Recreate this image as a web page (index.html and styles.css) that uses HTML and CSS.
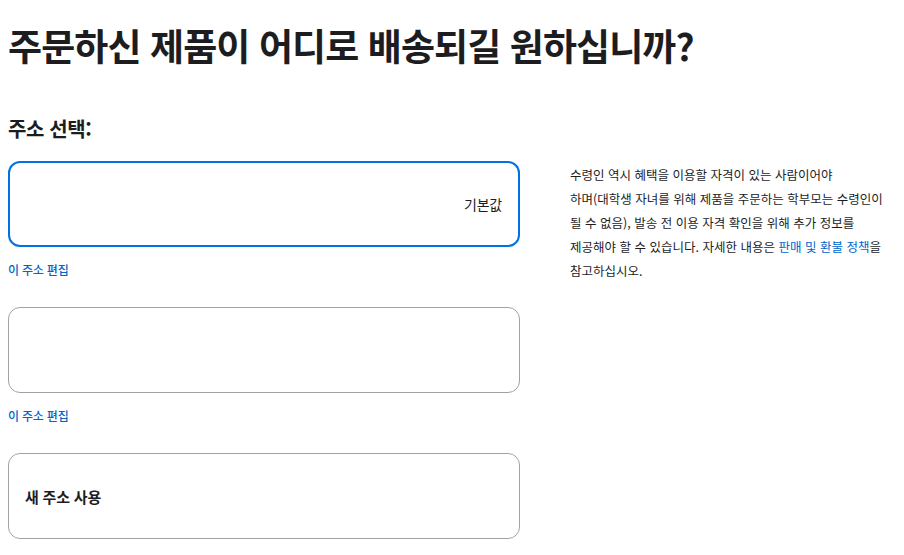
FILE: index.html
```html
<!DOCTYPE html>
<html lang="ko">
<head>
<meta charset="utf-8">
<title>배송 주소</title>
<link rel="stylesheet" href="styles.css">
</head>
<body>
<div class="page">
  <h1 class="title">주문하신 제품이 어디로 배송되길 원하십니까?</h1>
  <h2 class="subtitle">주소 선택:</h2>
  <div class="layout">
    <div class="addresses">
      <div class="addr-card selected">
        <span class="default-label">기본값</span>
      </div>
      <a class="edit-link" href="#">이 주소 편집</a>
      <div class="addr-card"></div>
      <a class="edit-link" href="#">이 주소 편집</a>
      <div class="addr-card new">
        <span class="new-label">새 주소 사용</span>
      </div>
    </div>
    <p class="notice">수령인 역시 혜택을 이용할 자격이 있는 사람이어야 <span class="nowrap">하며(대학생</span> 자녀를 위해 제품을 주문하는 학부모는 수령인이 될 수 없음), 발송 전 이용 자격 확인을 위해 추가 정보를 제공해야 할 수 있습니다. 자세한 내용은 <a href="#">판매 및 환불 정책</a>을 참고하십시오.</p>
  </div>
</div>
</body>
</html>
```
FILE: styles.css
```css
* { box-sizing: border-box; }
html, body { margin: 0; padding: 0; background: #fff; }
body {
  font-family: "Noto Sans CJK KR", "Noto Sans", sans-serif;
  color: #1d1d1f;
}
.page { padding: 0 8px; }
.title {
  margin: 0;
  padding-top: 21px;
  font-size: 37px;
  line-height: 48px;
  font-weight: 700;
  letter-spacing: -0.9px;
  color: #1d1d1f;
}
.subtitle {
  margin: 0;
  padding-top: 46px;
  font-size: 20px;
  line-height: 28px;
  font-weight: 700;
  letter-spacing: -0.4px;
  color: #1d1d1f;
}
.layout {
  display: flex;
  gap: 50px;
  margin-top: 18px;
}
.addresses {
  width: 512px;
  flex: none;
  display: flex;
  flex-direction: column;
  align-items: flex-start;
}
.addr-card {
  width: 100%;
  height: 86px;
  border: 1px solid #a1a1a6;
  border-radius: 12px;
  display: flex;
  align-items: center;
  padding: 0 16px;
}
.addr-card.selected {
  border: 2px solid #0071e3;
  justify-content: flex-end;
}
.default-label {
  font-size: 14px;
  color: #1d1d1f;
  letter-spacing: -0.2px;
}
.new-label {
  font-size: 15px;
  font-weight: 700;
  letter-spacing: -0.2px;
}
.edit-link {
  display: block;
  font-size: 12px;
  line-height: 18px;
  font-weight: 500;
  color: #0066cc;
  text-decoration: none;
  letter-spacing: -0.2px;
  margin: 14px 0 28px;
}
.notice {
  margin: 0;
  padding-top: 2px;
  width: 322px;
  font-size: 12.5px;
  line-height: 24px;
  letter-spacing: 0;
  word-break: keep-all;
  color: #1d1d1f;
}
.notice .nowrap { white-space: nowrap; }
.notice a { color: #0066cc; text-decoration: none; }
```
